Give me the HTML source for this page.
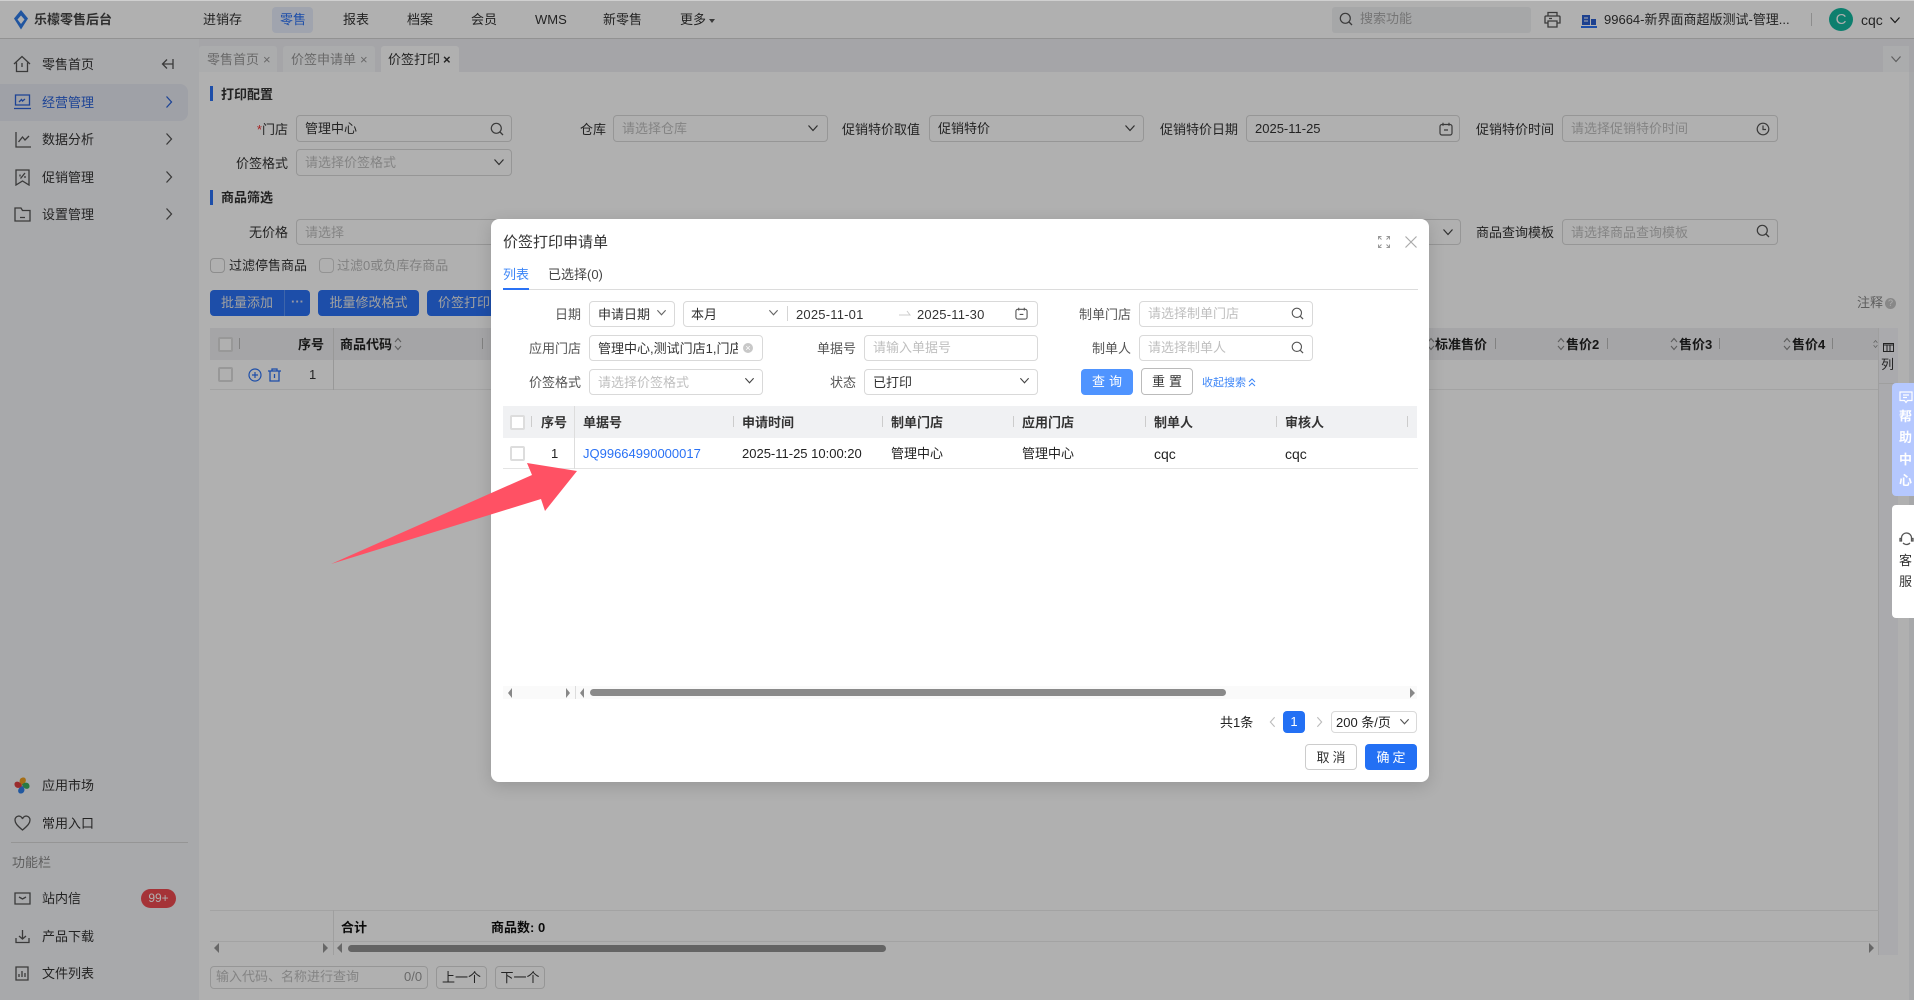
<!DOCTYPE html>
<html lang="zh-CN"><head><meta charset="utf-8"><title>价签打印</title>
<style>
*{box-sizing:border-box}
html,body{margin:0;padding:0;width:1914px;height:1000px;overflow:hidden;background:#fff}
body{position:relative;font:13px/20px "Liberation Sans","Noto Sans CJK SC",sans-serif;color:#333}
.a{position:absolute;white-space:nowrap;line-height:20px;height:20px;margin-top:1px}
.r{transform:translateX(-100%)}
.b{position:absolute}
.bd{font-weight:700}
.inp{position:absolute;border:1px solid #d9d9d9;border-radius:4px;background:#fff}
.ph{color:#bfbfbf}
.btn{position:absolute;background:#2a72f5;border-radius:4px;color:#fff;text-align:center}
.ic{position:absolute;fill:none;stroke:#555;stroke-width:1.3}
.v{position:absolute;width:1px;background:#d5d5d5}
.cb{position:absolute;width:15px;height:15px;border:2px solid #ddd;border-radius:2px;background:#fff}
.t{position:absolute;white-space:nowrap;line-height:20px;height:20px;font-weight:700;color:#222;margin-top:1px}
</style></head><body>
<svg width="0" height="0" style="position:absolute"><defs>
<symbol id="s" viewBox="0 0 14 14"><circle cx="6.3" cy="6.3" r="5" fill="none" stroke="currentColor" stroke-width="1.2"/><path d="M10 10l3 3" fill="none" stroke="currentColor" stroke-width="1.3"/></symbol>
<symbol id="d" viewBox="0 0 12 12"><path d="M1.5 3.5L6 8.5l4.500-5" fill="none" stroke="currentColor" stroke-width="1.2"/></symbol>
<symbol id="c" viewBox="0 0 14 14"><rect x="1" y="2.500" width="12" height="10.500" rx="2" fill="none" stroke="currentColor" stroke-width="1.200"/><path d="M4 .8v3M10 .8v3M5 8h4" fill="none" stroke="currentColor" stroke-width="1.200"/></symbol>
<symbol id="k" viewBox="0 0 14 14"><circle cx="7" cy="7" r="5.800" fill="none" stroke="currentColor" stroke-width="1.200"/><path d="M7 3.500V7.500H10" fill="none" stroke="currentColor" stroke-width="1.200"/></symbol>
<symbol id="rt" viewBox="0 0 8 14"><path d="M1.500 1.500L6.500 7l-5 5.500" fill="none" stroke="currentColor" stroke-width="1.300"/></symbol>
<symbol id="so" viewBox="0 0 8 14"><path d="M1 5L4 1.500 7 5M1 9l3 3.500L7 9" fill="none" stroke="currentColor" stroke-width="1.100"/></symbol>
</defs></svg>

<!-- base page -->
<div class="b" style="left:0;top:0;width:1914px;height:1000px;background:#fff"></div>
<div class="b" style="left:0;top:38px;width:1914px;height:1px;background:#d4d4d4"></div>
<div class="b" style="left:0;top:39px;width:199px;height:961px;background:#f4f5f8"></div>
<div class="b" style="left:199px;top:39px;width:1715px;height:33px;background:#eff0f3"></div>

<!-- top bar -->
<svg class="b" style="left:13px;top:10px" width="16" height="20" viewBox="0 0 16 20"><path d="M8 0L15 8.500 8 19.500 1 8.500Z" fill="#2f7be8"/><path d="M8 5.500l3.500 4L8 14 4.500 9.500Z" fill="#fff"/></svg>
<span class="a bd" style="left:34px;top:9px;color:#444">乐檬零售后台</span>
<span class="a" style="left:203px;top:9px">进销存</span>
<div class="b" style="left:272px;top:7px;width:41px;height:26px;background:#e8eefc;border-radius:4px"></div>
<span class="a" style="left:280px;top:9px;color:#2a72f5">零售</span>
<span class="a" style="left:343px;top:9px">报表</span>
<span class="a" style="left:407px;top:9px">档案</span>
<span class="a" style="left:471px;top:9px">会员</span>
<span class="a" style="left:535px;top:9px">WMS</span>
<span class="a" style="left:603px;top:9px">新零售</span>
<span class="a" style="left:680px;top:9px">更多</span>
<div class="b" style="left:709px;top:19px;border:3px solid transparent;border-top:4px solid #555"></div>
<div class="b" style="left:1332px;top:7px;width:199px;height:26px;background:#f1f2f4;border-radius:3px"></div>
<svg class="b" style="left:1339px;top:12px;color:#555" width="14" height="14"><use href="#s"/></svg>
<span class="a ph" style="left:1360px;top:8px;color:#aaa">搜索功能</span>
<svg class="ic" style="left:1544px;top:11px" width="17" height="17" viewBox="0 0 17 17"><path d="M4 5V1.500h9V5M2 5h13a1 1 0 0 1 1 1v6h-3M4 12H1V6a1 1 0 0 1 1-1M4 10h9v6H4zM5 7.500h3"/></svg>
<svg class="b" style="left:1581px;top:15px" width="16" height="13" viewBox="0 0 16 13"><path d="M1 0h8v10H1z" fill="#2a5fd0"/><path d="M10 4h5v6h-5z" fill="#2a5fd0"/><path d="M0 11h16v2H0z" fill="#2a72f5"/><path d="M3 3h4M3 6h4" stroke="#fff"/></svg>
<span class="a" style="left:1604px;top:9px">99664-新界面商超版测试-管理...</span>
<div class="v" style="left:1811px;top:13px;height:13px;background:#ccc"></div>
<div class="b" style="left:1829px;top:8px;width:24px;height:23px;border-radius:50%;background:#14b8a0;color:#fff;text-align:center;line-height:23px;font-size:15px">C</div>
<span class="a" style="left:1861px;top:9px;font-size:14px">cqc</span>
<svg class="b" style="left:1889px;top:14px;color:#222" width="12" height="12"><use href="#d"/></svg>

<!-- sidebar -->
<svg class="ic" style="left:13px;top:55px" width="18" height="18" viewBox="0 0 18 18"><path d="M1 9L9 1.500 17 9M3.500 7.500V16.500h11V7.500M9 8v4"/></svg>
<span class="a" style="left:42px;top:54px">零售首页</span>
<svg class="ic" style="left:161px;top:58px" width="13" height="12" viewBox="0 0 13 12"><path d="M6 1.500L1.500 6 6 10.500M1.500 6H12M12 1v10"/></svg>
<div class="b" style="left:0;top:84px;width:188px;height:37px;background:#e6e9f2;border-radius:0 8px 8px 0"></div>
<svg class="ic" style="left:14px;top:94px;stroke:#2a62d8" width="17" height="16" viewBox="0 0 17 16"><path d="M1.500 1h14v10h-14zM0 14.500h17M5 8l2.500-2.500 1 1.500L11 5"/></svg>
<span class="a" style="left:42px;top:92px;color:#2a62d8">经营管理</span>
<svg class="b" style="left:165px;top:95px;color:#2a62d8" width="8" height="14"><use href="#rt"/></svg>
<svg class="ic" style="left:15px;top:131px" width="16" height="17" viewBox="0 0 16 17"><path d="M1 1v15h15M3.500 11l4-5 2.500 3 4-4"/></svg>
<span class="a" style="left:42px;top:129px">数据分析</span>
<svg class="b" style="left:165px;top:132px;color:#555" width="8" height="14"><use href="#rt"/></svg>
<svg class="ic" style="left:15px;top:169px" width="15" height="17" viewBox="0 0 15 17"><path d="M1 1h13v15l-6.500-4L1 16zM5 5.500v2M10 4L5.500 9.500M10 7v2"/></svg>
<span class="a" style="left:42px;top:167px">促销管理</span>
<svg class="b" style="left:165px;top:170px;color:#555" width="8" height="14"><use href="#rt"/></svg>
<svg class="ic" style="left:14px;top:207px" width="17" height="15" viewBox="0 0 17 15"><path d="M1 1h6l1.500 2.500H16V14H1zM6 10.500h5"/></svg>
<span class="a" style="left:42px;top:204px">设置管理</span>
<svg class="b" style="left:165px;top:207px;color:#555" width="8" height="14"><use href="#rt"/></svg>

<svg class="b" style="left:14px;top:777px" width="16" height="17" viewBox="0 0 16 17"><path d="M7.500 8C4 5 5.500 0 10 0.500c3 1 2.500 6-2.500 7.500z" fill="#f0a020"/><path d="M8 7.500c3-3.500 8-2 7.500 2.500-1 3-6 2.500-7.500-2.500z" fill="#3ab060"/><path d="M8.500 9c3.500 3 2 8-2.500 7.500-3-1-2.500-6 2.500-7.500z" fill="#3080e8"/><path d="M8 9C5 12.500 0 11 .5 6.500c1-3 6-2.500 7.500 2.500z" fill="#e04040"/></svg>
<span class="a" style="left:42px;top:775px">应用市场</span>
<svg class="ic" style="left:14px;top:815px" width="17" height="16" viewBox="0 0 17 16"><path d="M8.500 15C3 10.500 1 8 1 5a3.800 3.800 0 0 1 7.500-1A3.800 3.800 0 0 1 16 5c0 3-2 5.500-7.500 10z"/></svg>
<span class="a" style="left:42px;top:813px">常用入口</span>
<div class="b" style="left:11px;top:842px;width:177px;height:1px;background:#d8d8d8"></div>
<span class="a" style="left:12px;top:852px;color:#888">功能栏</span>
<svg class="ic" style="left:14px;top:892px" width="17" height="13" viewBox="0 0 17 13"><path d="M1 1h15v11H1zM5 5l3.500 2L12 5"/></svg>
<span class="a" style="left:42px;top:888px">站内信</span>
<div class="b" style="left:141px;top:889px;width:35px;height:19px;border-radius:10px;background:#f04a50;color:#fff;text-align:center;font-size:12px;line-height:19px">99+</div>
<svg class="ic" style="left:15px;top:929px" width="15" height="15" viewBox="0 0 15 15"><path d="M1 9v4.500h13V9M7.500 1v9M4 7l3.500 3L11 7"/></svg>
<span class="a" style="left:42px;top:926px">产品下载</span>
<svg class="ic" style="left:15px;top:966px" width="14" height="15" viewBox="0 0 14 15"><path d="M1 1h12v13H1zM4 11V8M7 11V5M10 11V7"/></svg>
<span class="a" style="left:42px;top:963px">文件列表</span>

<!-- tabs -->
<div class="b" style="left:199px;top:46px;width:78px;height:26px;background:#f8f9fb;border-radius:3px 3px 0 0"></div>
<span class="a" style="left:207px;top:49px;color:#999">零售首页</span><span class="a" style="left:263px;top:49px;color:#999">×</span>
<div class="b" style="left:283px;top:46px;width:92px;height:26px;background:#f8f9fb;border-radius:3px 3px 0 0"></div>
<span class="a" style="left:291px;top:49px;color:#999">价签申请单</span><span class="a" style="left:360px;top:49px;color:#999">×</span>
<div class="b" style="left:381px;top:46px;width:78px;height:26px;background:#fff;border-radius:3px 3px 0 0"></div>
<span class="a" style="left:388px;top:49px">价签打印</span><span class="a bd" style="left:443px;top:49px">×</span>
<div class="b" style="left:1883px;top:46px;width:26px;height:26px;background:#f8f9fb"></div>
<svg class="b" style="left:1890px;top:53px;color:#888" width="12" height="12"><use href="#d"/></svg>

<!-- print config -->
<div class="b" style="left:210px;top:86px;width:3px;height:15px;background:#2a72f5"></div>
<span class="a bd" style="left:221px;top:84px">打印配置</span>
<span class="a r" style="left:288px;top:119px"><span style="color:#e33">*</span>门店</span>
<div class="inp" style="left:296px;top:115px;width:216px;height:27px"></div>
<span class="a" style="left:305px;top:118px">管理中心</span>
<svg class="b" style="left:490px;top:122px;color:#555" width="14" height="14"><use href="#s"/></svg>
<span class="a r" style="left:606px;top:119px">仓库</span>
<div class="inp" style="left:613px;top:115px;width:215px;height:27px"></div>
<span class="a ph" style="left:622px;top:118px">请选择仓库</span>
<svg class="b" style="left:807px;top:122px;color:#444" width="12" height="12"><use href="#d"/></svg>
<span class="a r" style="left:920px;top:119px">促销特价取值</span>
<div class="inp" style="left:929px;top:115px;width:215px;height:27px"></div>
<span class="a" style="left:938px;top:118px">促销特价</span>
<svg class="b" style="left:1124px;top:122px;color:#444" width="12" height="12"><use href="#d"/></svg>
<span class="a r" style="left:1238px;top:119px">促销特价日期</span>
<div class="inp" style="left:1246px;top:115px;width:214px;height:27px"></div>
<span class="a" style="left:1255px;top:118px">2025-11-25</span>
<svg class="b" style="left:1439px;top:122px;color:#555" width="14" height="14"><use href="#c"/></svg>
<span class="a r" style="left:1554px;top:119px">促销特价时间</span>
<div class="inp" style="left:1562px;top:115px;width:216px;height:27px"></div>
<span class="a ph" style="left:1571px;top:118px">请选择促销特价时间</span>
<svg class="b" style="left:1756px;top:122px;color:#555" width="14" height="14"><use href="#k"/></svg>
<span class="a r" style="left:288px;top:153px">价签格式</span>
<div class="inp" style="left:296px;top:149px;width:216px;height:27px"></div>
<span class="a ph" style="left:305px;top:152px">请选择价签格式</span>
<svg class="b" style="left:493px;top:156px;color:#444" width="12" height="12"><use href="#d"/></svg>

<div class="b" style="left:210px;top:190px;width:3px;height:15px;background:#2a72f5"></div>
<span class="a bd" style="left:221px;top:187px">商品筛选</span>
<span class="a r" style="left:288px;top:222px">无价格</span>
<div class="inp" style="left:296px;top:219px;width:300px;height:26px;border-right:0"></div>
<span class="a ph" style="left:305px;top:222px">请选择</span>
<div class="inp" style="left:1300px;top:219px;width:161px;height:26px"></div>
<svg class="b" style="left:1442px;top:226px;color:#444" width="12" height="12"><use href="#d"/></svg>
<span class="a r" style="left:1554px;top:222px">商品查询模板</span>
<div class="inp" style="left:1562px;top:219px;width:216px;height:26px"></div>
<span class="a ph" style="left:1571px;top:222px">请选择商品查询模板</span>
<svg class="b" style="left:1756px;top:224px;color:#555" width="14" height="14"><use href="#s"/></svg>

<div class="b" style="left:210px;top:258px;width:15px;height:15px;border:1px solid #ccc;border-radius:4px"></div>
<span class="a" style="left:229px;top:255px">过滤停售商品</span>
<div class="b" style="left:319px;top:258px;width:15px;height:15px;border:1px solid #d5d5d5;border-radius:4px"></div>
<span class="a" style="left:337px;top:255px;color:#bbb">过滤0或负库存商品</span>

<div class="btn" style="left:210px;top:290px;width:100px;height:26px"></div>
<div class="v" style="left:284px;top:290px;height:26px;background:#5a93f7"></div>
<span class="a" style="left:221px;top:292px;color:#e8e8e8">批量添加</span>
<span class="a bd" style="left:291px;top:291px;color:#dde;font-size:13px">···</span>
<div class="btn" style="left:318px;top:290px;width:101px;height:26px;line-height:26px;color:#e8e8e8">批量修改格式</div>
<div class="btn" style="left:427px;top:290px;width:100px;height:26px"></div>
<span class="a" style="left:438px;top:292px;color:#e8e8e8">价签打印</span>
<span class="a" style="left:1857px;top:292px;color:#888">注释</span>
<div class="b" style="left:1885px;top:298px;width:11px;height:11px;border-radius:50%;background:#c5c5c5;color:#fff;font-size:9px;line-height:11px;text-align:center">?</div>

<!-- main table -->
<div class="b" style="left:210px;top:328px;width:1669px;height:32px;background:#eff0f2"></div>
<div class="b" style="left:1879px;top:328px;width:19px;height:627px;background:#f6f6fb"></div>
<div class="b" style="left:210px;top:389px;width:1669px;height:1px;background:#ececec"></div>
<div class="v" style="left:333px;top:328px;height:62px;background:#ddd"></div>
<div class="v" style="left:1878px;top:328px;height:627px;background:#e6e6e6"></div>
<div class="b" style="left:1909px;top:72px;width:5px;height:928px;background:#f2f3f6"></div>
<div class="b" style="left:1879px;top:383px;width:19px;height:1px;background:#e6e6e6"></div>
<div class="cb" style="left:218px;top:337px"></div>
<div class="v" style="left:239px;top:338px;height:11px;background:#bbb"></div>
<span class="t" style="left:298px;top:334px">序号</span>
<span class="t" style="left:340px;top:334px">商品代码</span>
<svg class="b" style="left:394px;top:337px;color:#888" width="8" height="14"><use href="#so"/></svg>
<div class="v" style="left:482px;top:338px;height:11px;background:#bbb"></div>
<svg class="b" style="left:1427px;top:337px;color:#888" width="8" height="14"><use href="#so"/></svg>
<span class="t" style="left:1435px;top:334px">标准售价</span><div class="v" style="left:1495px;top:338px;height:11px;background:#bbb"></div>
<svg class="b" style="left:1557px;top:337px;color:#888" width="8" height="14"><use href="#so"/></svg>
<span class="t" style="left:1566px;top:334px">售价2</span><div class="v" style="left:1607px;top:338px;height:11px;background:#bbb"></div>
<svg class="b" style="left:1670px;top:337px;color:#888" width="8" height="14"><use href="#so"/></svg>
<span class="t" style="left:1679px;top:334px">售价3</span><div class="v" style="left:1719px;top:338px;height:11px;background:#bbb"></div>
<svg class="b" style="left:1783px;top:337px;color:#888" width="8" height="14"><use href="#so"/></svg>
<span class="t" style="left:1792px;top:334px">售价4</span><div class="v" style="left:1832px;top:338px;height:11px;background:#bbb"></div>
<svg class="b" style="left:1873px;top:337px;color:#888" width="5" height="14"><use href="#so"/></svg>
<svg class="b" style="left:1883px;top:343px" width="11" height="9" viewBox="0 0 11 9"><path d="M.5.500h10v8H.5zM0 2h11M4 2v7M7 2v7" fill="none" stroke="#333"/></svg>
<span class="a" style="left:1881px;top:354px">列</span>
<div class="cb" style="left:218px;top:367px"></div>
<svg class="b" style="left:248px;top:368px" width="14" height="14" viewBox="0 0 14 14"><circle cx="7" cy="7" r="6" fill="none" stroke="#2a72f5" stroke-width="1.200"/><path d="M4 7h6M7 4v6" stroke="#2a72f5" stroke-width="1.200"/></svg>
<svg class="b" style="left:268px;top:368px" width="13" height="14" viewBox="0 0 13 14"><path d="M0 3h13M4 3V1h5v2M2 3v10h9V3M6.500 6v4" fill="none" stroke="#2a72f5" stroke-width="1.300"/></svg>
<span class="a" style="left:309px;top:364px">1</span>

<!-- summary -->
<div class="b" style="left:210px;top:910px;width:1669px;height:1px;background:#ececec"></div>
<div class="b" style="left:210px;top:941px;width:1669px;height:1px;background:#ececec"></div>
<div class="v" style="left:333px;top:910px;height:45px;background:#e6e6e6"></div>
<span class="a bd" style="left:341px;top:917px;color:#111">合计</span>
<span class="a bd" style="left:491px;top:917px;color:#111">商品数: 0</span>
<div class="b" style="left:214px;top:943px;border:5px solid transparent;border-right:5px solid #959595;border-left:0"></div>
<div class="b" style="left:323px;top:943px;border:5px solid transparent;border-left:5px solid #959595;border-right:0"></div>
<div class="b" style="left:337px;top:943px;border:5px solid transparent;border-right:5px solid #959595;border-left:0"></div>
<div class="b" style="left:348px;top:945px;width:538px;height:7px;border-radius:4px;background:#929292"></div>
<div class="b" style="left:1869px;top:943px;border:5px solid transparent;border-left:5px solid #959595;border-right:0"></div>
<div class="inp" style="left:210px;top:966px;width:218px;height:23px"></div>
<span class="a ph" style="left:216px;top:966px">输入代码、名称进行查询</span>
<span class="a" style="left:404px;top:966px;color:#999">0/0</span>
<div class="inp" style="left:436px;top:966px;width:51px;height:23px;text-align:center;line-height:21px">上一个</div>
<div class="inp" style="left:495px;top:966px;width:50px;height:23px;text-align:center;line-height:21px">下一个</div>

<!-- overlay -->
<div class="b" style="left:0;top:1px;width:1914px;height:999px;background:rgba(0,0,0,.31)"></div>
<div class="b" style="left:0;top:0;width:1914px;height:1px;background:#d0d0d0"></div>

<!-- help -->
<div class="b" style="left:1892px;top:383px;width:22px;height:113px;background:#b5c8ff;border-radius:4px 0 0 4px"></div>
<svg class="b" style="left:1899px;top:391px" width="14" height="13" viewBox="0 0 14 13"><path d="M1 1h12v8.500H8.500L7 11.500 5.500 9.500H1zM4 4h6M4 6.500h4" fill="none" stroke="#fff" stroke-width="1.200"/></svg>
<span class="a bd" style="left:1899px;top:406px;color:#fff">帮</span>
<span class="a bd" style="left:1899px;top:427px;color:#fff">助</span>
<span class="a bd" style="left:1899px;top:449px;color:#fff">中</span>
<span class="a bd" style="left:1899px;top:470px;color:#fff">心</span>
<div class="b" style="left:1892px;top:505px;width:22px;height:113px;background:#fff;border-radius:4px 0 0 4px"></div>
<svg class="ic" style="left:1899px;top:532px" width="15" height="14" viewBox="0 0 15 14"><path d="M2.500 8V6a5 5 0 0 1 10 0v2M1 6.500h1.500V9H1zM12.500 6.500H14V9h-1.500zM4 11c2 2 5 2 7 0"/></svg>
<span class="a" style="left:1899px;top:550px;color:#333">客</span>
<span class="a" style="left:1899px;top:571px;color:#333">服</span>

<!-- modal -->
<div class="b" style="left:491px;top:219px;width:938px;height:563px;background:#fff;border-radius:8px;box-shadow:0 4px 16px rgba(0,0,0,.15)"></div>
<span class="a" style="left:503px;top:232px;font-size:15px;color:#333">价签打印申请单</span>
<svg class="ic" style="left:1378px;top:236px;stroke:#999;stroke-width:1" width="12" height="12" viewBox="0 0 12 12"><path d="M.5 3.500V.5h3M8.500.5h3v3M11.500 8.500v3h-3M3.500 11.500h-3v-3M.5.5l3 3M11.500.5l-3 3M11.500 11.500l-3-3M.5 11.500l3-3"/></svg>
<svg class="ic" style="left:1405px;top:236px;stroke:#aaa;stroke-width:1.200" width="12" height="12" viewBox="0 0 12 12"><path d="M.5.5l11 11M11.500.5l-11 11"/></svg>
<span class="a" style="left:503px;top:264px;color:#3d86f7">列表</span>
<span class="a" style="left:548px;top:264px;color:#444">已选择(0)</span>
<div class="b" style="left:503px;top:289px;width:915px;height:1px;background:#dcdcdc"></div>
<div class="b" style="left:503px;top:288px;width:26px;height:2px;background:#2a72f5"></div>

<span class="a r" style="left:581px;top:304px;color:#555">日期</span>
<div class="inp" style="left:589px;top:301px;width:86px;height:26px"></div>
<span class="a" style="left:598px;top:304px">申请日期</span>
<svg class="b" style="left:656px;top:307px;color:#666" width="11" height="11"><use href="#d"/></svg>
<div class="inp" style="left:683px;top:301px;width:355px;height:26px"></div>
<span class="a" style="left:691px;top:304px">本月</span>
<svg class="b" style="left:768px;top:307px;color:#666" width="11" height="11"><use href="#d"/></svg>
<div class="v" style="left:787px;top:306px;height:15px"></div>
<span class="a" style="left:796px;top:304px;letter-spacing:.2px">2025-11-01</span>
<svg class="b" style="left:899px;top:310px" width="12" height="7" viewBox="0 0 12 7"><path d="M0 5h11L8 1" fill="none" stroke="#ccc"/></svg>
<span class="a" style="left:917px;top:304px;letter-spacing:.2px">2025-11-30</span>
<svg class="b" style="left:1015px;top:307px;color:#555" width="13" height="13"><use href="#c"/></svg>
<span class="a r" style="left:1131px;top:304px;color:#555">制单门店</span>
<div class="inp" style="left:1139px;top:301px;width:174px;height:26px"></div>
<span class="a ph" style="left:1148px;top:303px">请选择制单门店</span>
<svg class="b" style="left:1291px;top:307px;color:#555" width="13" height="13"><use href="#s"/></svg>

<span class="a r" style="left:581px;top:338px;color:#555">应用门店</span>
<div class="inp" style="left:589px;top:335px;width:174px;height:26px"></div>
<div class="b" style="left:598px;top:339px;width:140px;height:20px;overflow:hidden;white-space:nowrap">管理中心,测试门店1,门店2,门店3</div>
<div class="b" style="left:743px;top:343px;width:10px;height:10px;border-radius:50%;background:#c8c8c8;color:#fff;font-size:9px;line-height:10px;text-align:center">×</div>
<span class="a r" style="left:856px;top:338px;color:#555">单据号</span>
<div class="inp" style="left:864px;top:335px;width:174px;height:26px"></div>
<span class="a ph" style="left:873px;top:337px">请输入单据号</span>
<span class="a r" style="left:1131px;top:338px;color:#555">制单人</span>
<div class="inp" style="left:1139px;top:335px;width:174px;height:26px"></div>
<span class="a ph" style="left:1148px;top:337px">请选择制单人</span>
<svg class="b" style="left:1291px;top:341px;color:#555" width="13" height="13"><use href="#s"/></svg>

<span class="a r" style="left:581px;top:372px;color:#555">价签格式</span>
<div class="inp" style="left:589px;top:369px;width:174px;height:26px"></div>
<span class="a ph" style="left:598px;top:372px">请选择价签格式</span>
<svg class="b" style="left:744px;top:375px;color:#444" width="11" height="11"><use href="#d"/></svg>
<span class="a r" style="left:856px;top:372px;color:#555">状态</span>
<div class="inp" style="left:864px;top:369px;width:174px;height:26px"></div>
<span class="a" style="left:873px;top:372px">已打印</span>
<svg class="b" style="left:1019px;top:375px;color:#444" width="11" height="11"><use href="#d"/></svg>
<div class="btn" style="left:1081px;top:369px;width:52px;height:26px;line-height:25px;background:#4f94ff;letter-spacing:4px;padding-left:4px">查询</div>
<div class="inp" style="left:1141px;top:368px;width:52px;height:27px;line-height:25px;text-align:center;letter-spacing:4px;padding-left:4px;border-color:#bbb">重置</div>
<span class="a" style="left:1202px;top:372px;font-size:11px;color:#3d86f7">收起搜索</span>
<svg class="b" style="left:1248px;top:378px" width="8" height="9" viewBox="0 0 8 9"><path d="M1 4L4 1l3 3M1 8l3-3 3 3" fill="none" stroke="#3d86f7"/></svg>

<!-- modal table -->
<div class="b" style="left:503px;top:406px;width:914px;height:32px;background:#f0f1f3"></div>
<div class="b" style="left:503px;top:468px;width:915px;height:1px;background:#e4e4e4"></div>
<div class="v" style="left:574px;top:406px;height:63px;background:#ddd"></div>
<div class="cb" style="left:510px;top:415px"></div>
<div class="v" style="left:531px;top:416px;height:11px;background:#ccc"></div>
<span class="t" style="left:541px;top:412px;color:#333">序号</span>
<span class="t" style="left:583px;top:412px;color:#333">单据号</span><div class="v" style="left:733px;top:416px;height:11px;background:#ccc"></div>
<span class="t" style="left:742px;top:412px;color:#333">申请时间</span><div class="v" style="left:882px;top:416px;height:11px;background:#ccc"></div>
<span class="t" style="left:891px;top:412px;color:#333">制单门店</span><div class="v" style="left:1013px;top:416px;height:11px;background:#ccc"></div>
<span class="t" style="left:1022px;top:412px;color:#333">应用门店</span><div class="v" style="left:1145px;top:416px;height:11px;background:#ccc"></div>
<span class="t" style="left:1154px;top:412px;color:#333">制单人</span><div class="v" style="left:1276px;top:416px;height:11px;background:#ccc"></div>
<span class="t" style="left:1285px;top:412px;color:#333">审核人</span><div class="v" style="left:1407px;top:416px;height:11px;background:#ccc"></div>
<div class="cb" style="left:510px;top:446px"></div>
<span class="a" style="left:551px;top:443px;color:#222">1</span>
<span class="a" style="left:583px;top:443px;color:#2a72f5">JQ99664990000017</span>
<span class="a" style="left:742px;top:443px;color:#222">2025-11-25 10:00:20</span>
<span class="a" style="left:891px;top:443px;color:#222">管理中心</span>
<span class="a" style="left:1022px;top:443px;color:#222">管理中心</span>
<span class="a" style="left:1154px;top:443px;color:#222;font-size:14px">cqc</span>
<span class="a" style="left:1285px;top:443px;color:#222;font-size:14px">cqc</span>

<div class="b" style="left:503px;top:686px;width:914px;height:13px;background:#fafafa"></div>
<div class="v" style="left:575px;top:686px;height:13px;background:#ddd"></div>
<div class="b" style="left:508px;top:688px;border:5px solid transparent;border-right:4px solid #888;border-left:0"></div>
<div class="b" style="left:566px;top:688px;border:5px solid transparent;border-left:4px solid #888;border-right:0"></div>
<div class="b" style="left:580px;top:688px;border:5px solid transparent;border-right:4px solid #888;border-left:0"></div>
<div class="b" style="left:590px;top:689px;width:636px;height:7px;border-radius:4px;background:#8a8a8a"></div>
<div class="b" style="left:1410px;top:688px;border:5px solid transparent;border-left:5px solid #888;border-right:0"></div>

<span class="a" style="left:1220px;top:712px;color:#222">共1条</span>
<svg class="b" style="left:1269px;top:716px;color:#bbb;transform:scaleX(-1)" width="7" height="12"><use href="#rt"/></svg>
<div class="btn" style="left:1283px;top:711px;width:22px;height:22px;line-height:22px;background:#2370f4">1</div>
<svg class="b" style="left:1316px;top:716px;color:#bbb" width="7" height="12"><use href="#rt"/></svg>
<div class="inp" style="left:1331px;top:711px;width:86px;height:22px"></div>
<span class="a" style="left:1336px;top:712px;color:#222">200 条/页</span>
<svg class="b" style="left:1399px;top:716px;color:#555" width="11" height="11"><use href="#d"/></svg>
<div class="inp" style="left:1305px;top:744px;width:52px;height:26px;line-height:25px;text-align:center;letter-spacing:3px;padding-left:3px;border-color:#ccc">取消</div>
<div class="btn" style="left:1365px;top:744px;width:52px;height:26px;line-height:27px;background:#2370f4;letter-spacing:3px;padding-left:3px">确定</div>

<!-- arrow -->
<svg class="b" style="left:0;top:0;pointer-events:none" width="1914" height="1000"><polygon points="331,564 532,475 527,463 577,471 545,511 541,499" fill="#ff5164"/></svg>
</body></html>
